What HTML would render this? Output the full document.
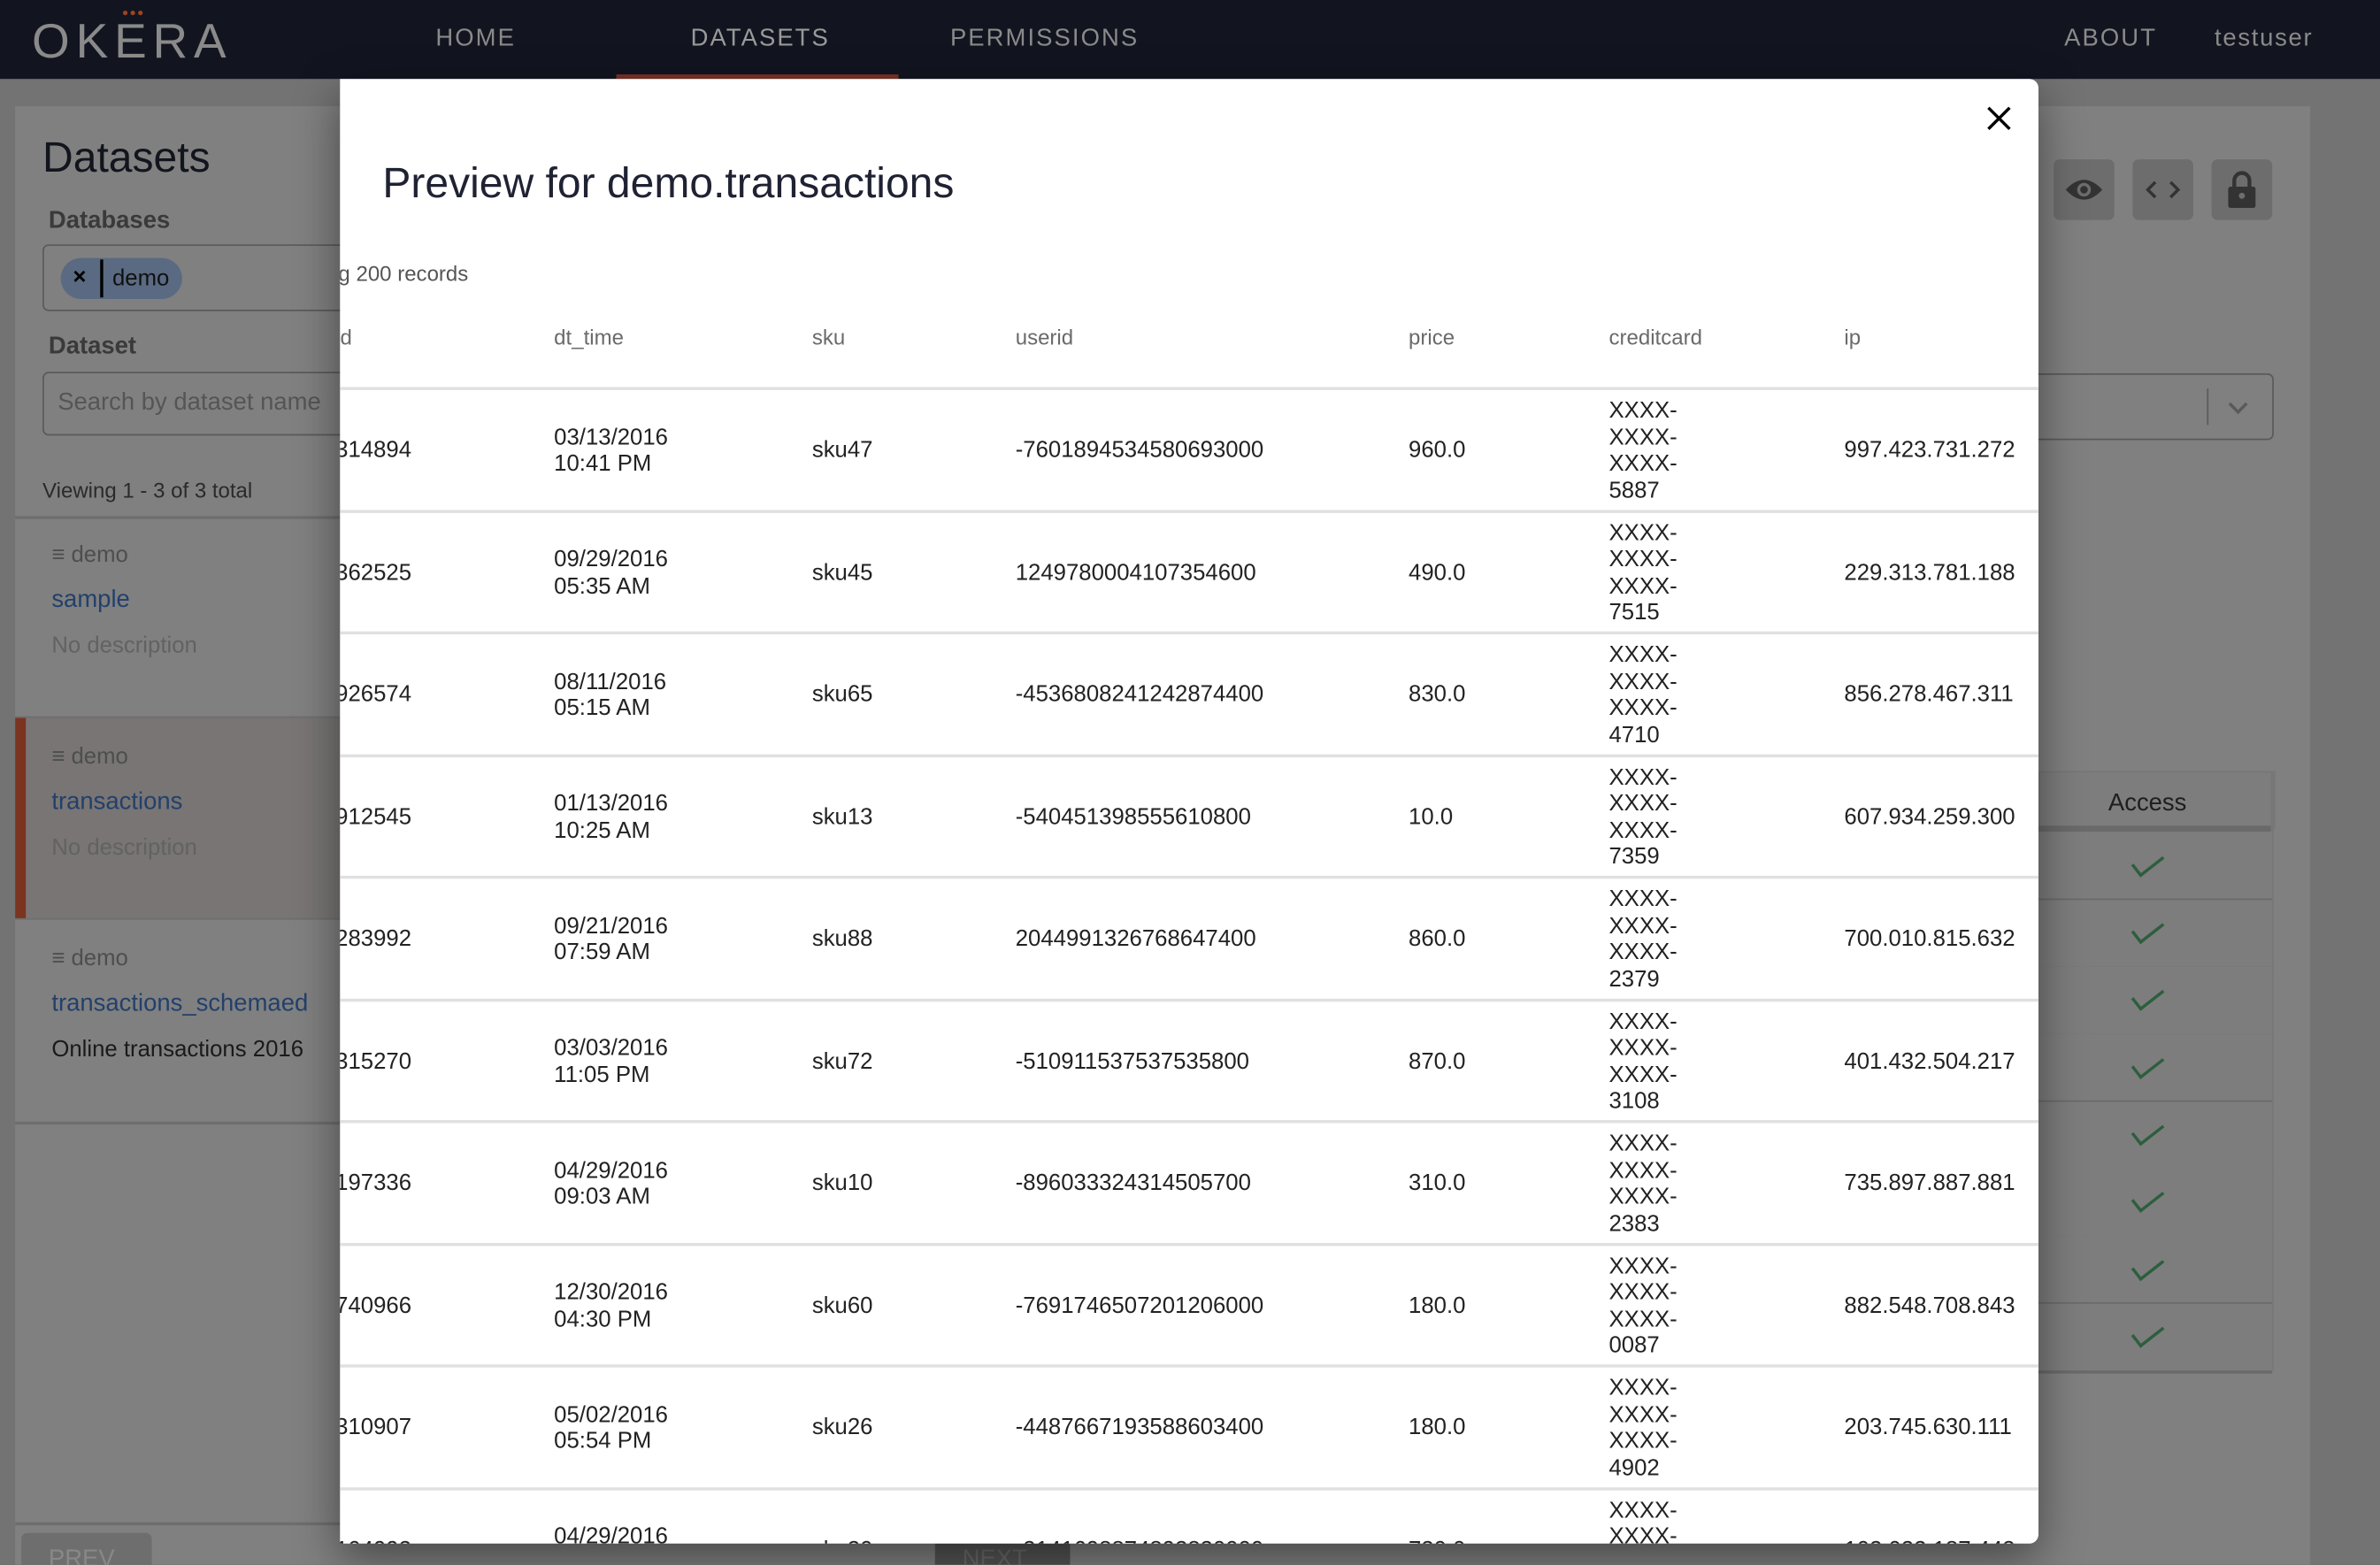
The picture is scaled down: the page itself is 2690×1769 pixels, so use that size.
<!DOCTYPE html>
<html><head><meta charset="utf-8"><style>
html,body{margin:0;padding:0;width:2690px;height:1768px;overflow:hidden;background:#737373}
#w{position:absolute;left:0;top:0;width:1568px;height:1031px;transform:scale(1.715561);transform-origin:0 0;font-family:"Liberation Sans",sans-serif;overflow:hidden;background:#737373}
.a{position:absolute}
.nav{left:0;top:0;width:1568px;height:52px;background:#121520}
.nl{top:17px;font-size:16px;letter-spacing:1.2px;color:#8a8a8a}
.modal{left:224px;top:52px;width:1119px;height:965px;background:#fff;overflow:hidden;border-radius:0 6px 6px 0;box-shadow:0 10px 30px rgba(0,0,0,.45)}
.th{top:162px;font-size:14px;color:#6a6a6a}
.row{position:absolute;left:0;width:1119px;height:80px;border-top:2px solid #e0e0e0}
.c{position:absolute;top:0;height:80px;display:flex;align-items:center;font-size:15px;color:#222;line-height:17.5px;white-space:nowrap}
.chk{position:absolute;left:1405px;width:18px;height:8px;border-left:2.5px solid #2d5e3e;border-bottom:2.5px solid #2d5e3e;transform:rotate(-38deg)}
.ar{position:absolute;left:1343px;width:154px;height:44px;border-bottom:2px solid #6a6a6a;background:#7d7d7d}
</style></head><body><div id="w">
<div class="a nav"></div>
<div class="a" style="left:21px;top:9px;font-size:32px;letter-spacing:4px;color:#8a8a8a;line-height:36px">OKERA</div>
<div class="a" style="left:81px;top:7px;width:3px;height:3px;border-radius:50%;background:#a0441f;box-shadow:5px 0 #a0441f,10px 0 #a0441f"></div>
<div class="a nl" style="left:287px">HOME</div>
<div class="a nl" style="left:455px;color:#9a9a9a">DATASETS</div>
<div class="a" style="left:406px;top:49px;width:186px;height:3px;background:#7a3328"></div>
<div class="a nl" style="left:626px">PERMISSIONS</div>
<div class="a nl" style="left:1360px">ABOUT</div>
<div class="a nl" style="left:1459px;letter-spacing:1px">testuser</div>

<div class="a" style="left:10px;top:70px;width:1512px;height:961px;background:#808080"></div>
<div class="a" style="left:28px;top:88px;font-size:28px;color:#12151d">Datasets</div>
<div class="a" style="left:32px;top:137px;font-size:16px;font-weight:bold;color:#3a3a3a">Databases</div>
<div class="a" style="left:28px;top:161px;width:220px;height:42px;border:1.5px solid #5a5a5a;border-radius:4px"></div>
<div class="a" style="left:40px;top:170px;width:80px;height:27px;border-radius:14px;background:#5a6a82"></div>
<div class="a" style="left:48px;top:174px;font-size:15px;font-weight:bold;color:#000">×</div>
<div class="a" style="left:66px;top:171px;width:1.5px;height:25px;background:#000"></div>
<div class="a" style="left:74px;top:175px;font-size:15px;color:#111">demo</div>
<div class="a" style="left:32px;top:220px;font-size:16px;font-weight:bold;color:#3a3a3a">Dataset</div>
<div class="a" style="left:28px;top:245px;width:220px;height:40px;border:1.5px solid #5a5a5a;border-radius:4px"></div>
<div class="a" style="left:38px;top:257px;font-size:16px;color:#555">Search by dataset name</div>
<div class="a" style="left:28px;top:315px;font-size:14px;color:#2a2a2a">Viewing 1 - 3 of 3 total</div>
<div class="a" style="left:10px;top:340px;width:214px;height:1.5px;background:#6e6e6e"></div>
<div class="a" style="left:10px;top:473px;width:214px;height:132px;background:#787574"></div>
<div class="a" style="left:10px;top:473px;width:7px;height:132px;background:#7a3420"></div>
<div class="a" style="left:10px;top:472px;width:214px;height:1px;background:#6e6e6e"></div>
<div class="a" style="left:10px;top:605px;width:214px;height:1px;background:#6e6e6e"></div>
<div class="a" style="left:10px;top:739px;width:214px;height:1.5px;background:#6e6e6e"></div>
<div class="a" style="left:10px;top:1003px;width:214px;height:2px;background:#6e6e6e"></div>
<div class="a" style="left:14px;top:1010px;width:86px;height:30px;border-radius:4px;background:#6e6e6e"></div>
<div class="a" style="left:32px;top:1019px;font-size:16px;color:#888">PREV</div>

<div class="a" style="left:34px;top:357px;font-size:15px;color:#4e4e4e">≡ demo</div>
<div class="a" style="left:34px;top:387px;font-size:16px;color:#23406b">sample</div>
<div class="a" style="left:34px;top:417px;font-size:15px;color:#626262">No description</div>
<div class="a" style="left:34px;top:490px;font-size:15px;color:#4e4e4e">≡ demo</div>
<div class="a" style="left:34px;top:520px;font-size:16px;color:#23406b">transactions</div>
<div class="a" style="left:34px;top:550px;font-size:15px;color:#626262">No description</div>
<div class="a" style="left:34px;top:623px;font-size:15px;color:#4e4e4e">≡ demo</div>
<div class="a" style="left:34px;top:653px;font-size:16px;color:#23406b">transactions_schemaed</div>
<div class="a" style="left:34px;top:683px;font-size:15px;color:#1a1a1a">Online transactions 2016</div>

<div class="a" style="left:1353px;top:105px;width:40px;height:40px;border-radius:4px;background:#6d6d6d"></div>
<div class="a" style="left:1405px;top:105px;width:40px;height:40px;border-radius:4px;background:#6d6d6d"></div>
<div class="a" style="left:1457px;top:105px;width:40px;height:40px;border-radius:4px;background:#6d6d6d"></div>
<svg class="a" style="left:1353px;top:105px" width="144" height="40" viewBox="0 0 144 40">
<path d="M8 20 Q20 7 32 20 Q20 33 8 20Z" fill="#333"/><circle cx="20" cy="20" r="4.5" fill="#6d6d6d"/><circle cx="20" cy="20" r="2.5" fill="#333"/>
<path d="M67 15 L62 20 L67 25 M77 15 L82 20 L77 25" stroke="#333" stroke-width="2" fill="none"/>
<path d="M119 19 V14 a5 5 0 0 1 10 0 V19" stroke="#333" stroke-width="2.5" fill="none"/><rect x="115" y="18" width="18" height="14" rx="1.5" fill="#333"/><circle cx="124" cy="24" r="2" fill="#6d6d6d"/>
</svg>
<div class="a" style="left:1330px;top:246px;width:166px;height:42px;border:1.5px solid #5a5a5a;border-radius:4px"></div>
<div class="a" style="left:1454px;top:256px;width:1px;height:24px;background:#5a5a5a"></div>
<div class="a" style="left:1470px;top:262px;width:7px;height:7px;border-right:2px solid #5a5a5a;border-bottom:2px solid #5a5a5a;transform:rotate(45deg)"></div>
<div class="a" style="left:1343px;top:508px;width:154px;height:36px;border:1px solid #777;background:#7d7d7d"></div>
<div class="a" style="left:1389px;top:521px;font-size:16px;color:#1e1e1e">Access</div>
<div class="a" style="left:1343px;top:544px;width:155px;height:4px;background:#6a6a6a"></div>
<div class="a" style="left:1496px;top:508px;width:2px;height:395px;background:#777"></div>
<div class="ar" style="top:548px"></div><div class="ar" style="top:593px"></div><div class="ar" style="top:637px"></div><div class="ar" style="top:681px"></div><div class="ar" style="top:726px"></div><div class="ar" style="top:770px"></div><div class="ar" style="top:814px"></div><div class="ar" style="top:859px"></div>
<div class="chk" style="top:563px"></div><div class="chk" style="top:607px"></div><div class="chk" style="top:651px"></div><div class="chk" style="top:696px"></div><div class="chk" style="top:740px"></div><div class="chk" style="top:784px"></div><div class="chk" style="top:829px"></div><div class="chk" style="top:873px"></div>
<div class="a" style="left:616px;top:1017px;width:89px;height:14px;background:#545454"></div>
<div class="a" style="left:634px;top:1019px;font-size:16px;color:#6a6a6a">NEXT</div>

<div class="a modal">
<svg class="a" style="left:1084px;top:17px" width="18" height="18" viewBox="0 0 18 18"><path d="M2 2L16 16M16 2L2 16" stroke="#000" stroke-width="2"/></svg>
<div class="a" style="left:28px;top:53px;font-size:28px;color:#1f2233">Preview for demo.transactions</div>
<div class="a" style="left:-47px;top:120px;font-size:14px;color:#555">Showing 200 records</div>
<div class="a th" style="left:-3px">id</div>
<div class="a th" style="left:141px">dt_time</div>
<div class="a th" style="left:311px">sku</div>
<div class="a th" style="left:445px">userid</div>
<div class="a th" style="left:704px">price</div>
<div class="a th" style="left:836px">creditcard</div>
<div class="a th" style="left:991px">ip</div>
<div id="rows"></div>
</div>
</div>
<script>
var d=[["314894","03/13/2016<br>10:41 PM","sku47","-7601894534580693000","960.0","5887","997.423.731.272"],
["362525","09/29/2016<br>05:35 AM","sku45","1249780004107354600","490.0","7515","229.313.781.188"],
["926574","08/11/2016<br>05:15 AM","sku65","-4536808241242874400","830.0","4710","856.278.467.311"],
["912545","01/13/2016<br>10:25 AM","sku13","-540451398555610800","10.0","7359","607.934.259.300"],
["283992","09/21/2016<br>07:59 AM","sku88","2044991326768647400","860.0","2379","700.010.815.632"],
["315270","03/03/2016<br>11:05 PM","sku72","-510911537537535800","870.0","3108","401.432.504.217"],
["197336","04/29/2016<br>09:03 AM","sku10","-896033324314505700","310.0","2383","735.897.887.881"],
["740966","12/30/2016<br>04:30 PM","sku60","-7691746507201206000","180.0","0087","882.548.708.843"],
["310907","05/02/2016<br>05:54 PM","sku26","-4487667193588603400","180.0","4902","203.745.630.111"],
["104993","04/29/2016<br>11:12 AM","sku30","-3141698874892830000","730.0","1234","102.022.187.443"]];
var xs=[-3,141,311,445,704,836,991],h="";
d.forEach(function(r,i){h+='<div class="row" style="top:'+(203+i*80.5)+'px">';
r.forEach(function(v,j){if(j==5)v="XXXX-<br>XXXX-<br>XXXX-<br>"+v;h+='<div class="c" style="left:'+xs[j]+'px">'+(j==1||j==5?'<div>'+v+'</div>':v)+'</div>';});h+='</div>';});
document.getElementById('rows').innerHTML=h;
</script>
</body></html>
